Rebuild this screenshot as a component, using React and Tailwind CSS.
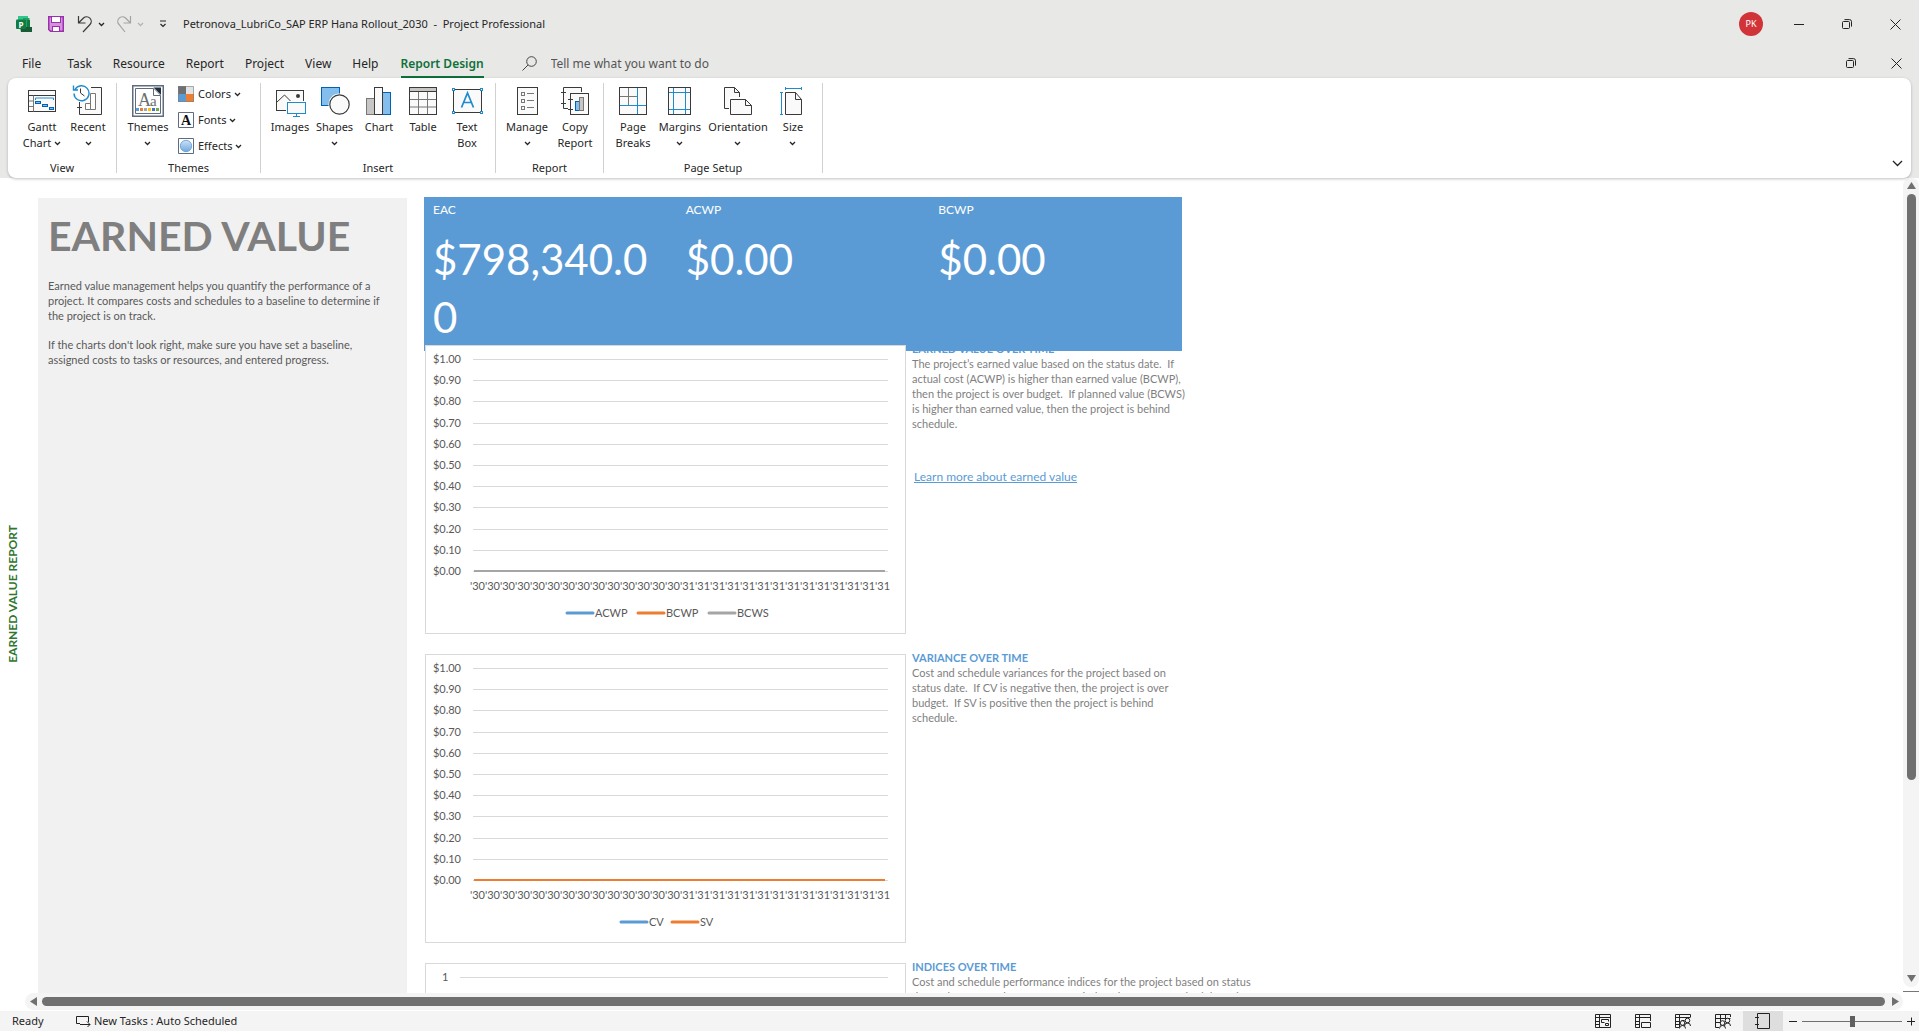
import React from 'react';

const ink = '#3b3a39';
const blue = '#1e8bcd';

function Svg({ w = 32, h = 32, children, className = '' }) {
  return (
    <svg width={w} height={h} viewBox={`0 0 ${w} ${h}`} fill="none" className={`shrink-0 ${className}`} aria-hidden="true">
      {children}
    </svg>
  );
}

function Caret({ color = '#262626' }) {
  return (
    <Svg w={7} h={5} className="inline-block">
      <path d="M1 1l2.500 2.500L6 1" stroke={color} strokeWidth="1.300" />
    </Svg>
  );
}

/* ---------- ribbon icons ---------- */
const GanttIcon = () => (
  <Svg>
    <rect x="2.500" y="5.500" width="27" height="21" fill="#fafafa" stroke={ink} />
    <path d="M2.500 10.500h27" stroke={ink} />
    <path d="M7.500 10.500v16M3 16h4.500M3 21.500h4.500" stroke="#797774" />
    <path d="M9.500 15v-2h18v2" stroke={blue} />
    <rect x="9.500" y="16.500" width="5" height="2" fill="#83beec" stroke="#0063b1" />
    <rect x="16.500" y="19.500" width="5" height="2" fill="#83beec" stroke="#0063b1" />
    <rect x="23.500" y="22.500" width="4" height="2" fill="#83beec" stroke="#0063b1" />
  </Svg>
);
const RecentIcon = () => (
  <Svg>
    <path d="M19 2.500h10.500v27h-22V17" fill="#fafafa" stroke={ink} />
    <path d="M5 22.500h5" stroke={ink} />
    <path d="M13.500 24.500v-6h5v6zM18.500 24.500V8.500h5v16z" fill="#fff" stroke="#797774" />
    <circle cx="9" cy="8" r="8.500" fill="#fff" />
    <path d="M3 4.500a7.500 7.500 0 1 1-1 4M1.500 0.500v4.500h4.500" stroke={blue} strokeWidth="1.400" />
    <path d="M8.500 3.500v4.500l4 3" stroke={ink} />
  </Svg>
);
const ThemesIcon = () => (
  <Svg>
    <rect x="0.750" y="0.750" width="30.500" height="30.500" fill="#fff" stroke="#5f6b7f" strokeWidth="1.500" />
    <path d="M3.500 3.500h18l7 7v18h-25z" fill="#fff" stroke="#5f6b7f" />
    <path d="M21.500 2.500h7.500V10z" fill="#1f2d3d" />
    <path d="M21.500 3.500v7h7" stroke="#5f6b7f" fill="#fff" />
    <text x="6" y="21" fontFamily="Liberation Serif" fontSize="18" fill="#6d6f71">A</text>
    <text x="18" y="21" fontFamily="Liberation Serif" fontSize="15" fill="#6d6f71">a</text>
    {['#5b9bd5', '#ed7d31', '#a5a5a5', '#ffc000', '#4472c4', '#70ad47'].map((c, i) => (
      <rect key={c} x={4 + i * 4} y="23" width="3" height="3" fill={c} />
    ))}
  </Svg>
);
const ImagesIcon = () => (
  <Svg>
    <rect x="2.500" y="5.500" width="27" height="20" fill="#fafafa" stroke={ink} />
    <path d="M3 17l7.500-7 7 7" stroke={ink} />
    <circle cx="24" cy="11" r="2" fill={ink} />
    <rect x="12" y="16" width="20" height="16" fill="#fff" />
    <rect x="13.500" y="17.500" width="18" height="11" fill="#fafafa" stroke={blue} />
    <path d="M22.500 29v3M19 31.500h7" stroke={blue} />
  </Svg>
);
const ShapesIcon = () => (
  <Svg>
    <rect x="2.500" y="2.500" width="18" height="18" fill="#83beec" stroke="#0063b1" />
    <circle cx="20.500" cy="19.500" r="11" fill="#fff" />
    <circle cx="20.500" cy="19.500" r="9.700" fill="#fafafa" stroke={ink} strokeWidth="1.200" />
  </Svg>
);
const ChartIcon = () => (
  <Svg>
    <rect x="3.500" y="13.500" width="8" height="16" fill="#c8c6c4" stroke="#797774" />
    <rect x="19.500" y="7.500" width="8" height="22" fill="#83beec" stroke="#0063b1" />
    <rect x="11.500" y="2.500" width="8" height="27" fill="#fafafa" stroke={ink} />
  </Svg>
);
const TableIcon = () => (
  <Svg>
    <rect x="2.500" y="2.500" width="27" height="27" fill="#fafafa" />
    <rect x="3" y="3" width="26" height="4" fill="#c8c6c4" />
    <path d="M11.500 7v22M20.500 7v22M3 14.500h26M3 22h26" stroke="#797774" />
    <path d="M2.500 6.500h27" stroke={ink} />
    <rect x="2.500" y="2.500" width="27" height="27" stroke={ink} />
  </Svg>
);
const TextBoxIcon = () => (
  <Svg>
    <rect x="2.500" y="4.500" width="28" height="23" fill="#fafafa" stroke={ink} />
    <path d="M10.500 22.500L16.500 8l6 14.500M12.500 17.500h8" stroke={blue} strokeWidth="1.700" />
    {[[1, 3], [29, 3], [1, 26], [29, 26]].map(([x, y]) => (
      <rect key={`${x}-${y}`} x={x + 0.5} y={y + 0.5} width="2" height="2" fill="#fff" stroke={blue} />
    ))}
  </Svg>
);
const ManageIcon = () => (
  <Svg>
    <rect x="6.500" y="2.500" width="20" height="27" fill="#fafafa" stroke={ink} />
    {[7, 14, 21].map((y) => (
      <g key={y} stroke="#797774">
        <rect x="10.500" y={y + 0.5} width="3" height="3" />
        <path d={`M16 ${y + 1.5}h7`} />
      </g>
    ))}
  </Svg>
);
const CopyReportIcon = () => (
  <Svg>
    <path d="M9 23.500H4.500v-21h18V7" fill="#fafafa" stroke={ink} />
    <path d="M2 7.500h5M2 18.500h5" stroke={ink} />
    <rect x="11.500" y="8.500" width="18" height="21" fill="#fafafa" stroke={ink} />
    <path d="M9 14.500h5M9 24.500h5" stroke={ink} />
    <rect x="16.500" y="16.500" width="4" height="9" fill="#83beec" stroke="#0063b1" />
    <rect x="20.500" y="12.500" width="4" height="13" fill="#c8c6c4" stroke="#797774" />
  </Svg>
);
const PageBreaksIcon = () => (
  <Svg>
    <rect x="2.500" y="2.500" width="27" height="27" fill="#fafafa" stroke={ink} />
    <path d="M11.500 3v17M3 11.500h17" stroke="#797774" />
    <path d="M20.500 3v26M3 20.500h26" stroke={blue} />
  </Svg>
);
const MarginsIcon = () => (
  <Svg>
    <rect x="4.500" y="2.500" width="22" height="27" fill="#fafafa" stroke={ink} />
    <path d="M9.500 3v26M21.500 3v26M5 7.500h21M5 24.500h21" stroke={blue} />
  </Svg>
);
const OrientationIcon = () => (
  <Svg>
    <path d="M2.500 2.500h10l5 5v16h-15z" fill="#fafafa" stroke={ink} />
    <path d="M12.500 2.500v5h5" stroke={ink} />
    <rect x="7" y="12" width="12" height="19" fill="#fff" />
    <path d="M8.500 14.500h15l6 6v9h-21z" fill="#fafafa" stroke={ink} />
    <path d="M23.500 14.500v6h6" stroke={ink} />
  </Svg>
);
const SizeIcon = () => (
  <Svg>
    <path d="M8.500 7.500h10l6 7v15h-16z" fill="#fafafa" stroke={ink} />
    <path d="M18.500 7.500v7h6" stroke={ink} />
    <path d="M8.500 3.500h16M8.500 2v3M24.500 2v3M4.500 7.500v22M3 7.500h3M3 29.500h3" stroke={blue} />
  </Svg>
);

/* ---------- ribbon pieces ---------- */
function BigButton({ icon, lines, caret, width }) {
  return (
    <button className={`flex flex-col items-center gap-[2px] text-[11px] leading-4 whitespace-nowrap ${width}`}>
      {icon}
      <span className="flex flex-col items-center">
        {lines.map((l, i) => (
          <span key={l}>
            {l}
            {caret && i === 1 && <span className="ml-[3px] inline-flex pb-px align-middle"><Caret /></span>}
          </span>
        ))}
        {caret && lines.length === 1 && <span className="flex h-4 items-center"><Caret /></span>}
      </span>
    </button>
  );
}

function SmallButton({ icon, label }) {
  return (
    <button className="flex h-[26px] items-center text-[11px] leading-4">
      {icon}
      <span className="ml-1 mr-[3px]">{label}</span>
      <Caret />
    </button>
  );
}

function Group({ label, className, pad, children }) {
  return (
    <section className={`flex flex-col border-r border-[#d1d1d1] ${className}`} aria-label={label}>
      <div className={`flex h-[77px] shrink-0 items-start pt-[2px] ${pad}`}>{children}</div>
      <h2 className="text-center text-[11px] leading-4">{label}</h2>
    </section>
  );
}

/* ---------- window glyphs ---------- */
const RestoreGlyph = () => (
  <Svg w={10} h={10}>
    <rect x="0.500" y="2.500" width="7" height="7" rx="1" stroke="#222" />
    <path d="M2.500 0.600h5a2 2 0 0 1 2 2v5" stroke="#222" />
  </Svg>
);
const CloseGlyph = () => (
  <Svg w={11} h={11}>
    <path d="M0.500 0.500l10 10M10.500 0.500l-10 10" stroke="#222" />
  </Svg>
);

/* ---------- report charts ---------- */
const dates = Array(14).fill("'30").concat(Array(14).fill("'31")).join('');

function TimeChart({ label, series, legendX }) {
  const top = series[series.length - 1];
  return (
    <svg width="481" height="289" viewBox="0 0 481 289" role="img" aria-label={label} fontFamily="Lato, sans-serif" fontSize="11" fill="#595959" className="relative z-20 block shrink-0">
      <rect x="0.500" y="0.500" width="480" height="288" fill="#fff" stroke="#d9d9d9" />
      {Array.from({ length: 11 }, (_, i) => {
        const y = 14 + Math.round(i * 21.2);
        return (
          <g key={i}>
            <path d={`M48 ${y + 0.5}h415`} stroke="#d9d9d9" />
            <text x="36" y={y + 4} textAnchor="end">{`$${(1 - i / 10).toFixed(2)}`}</text>
          </g>
        );
      })}
      <path d="M49 226h411" stroke={top.color} strokeWidth="2" />
      <text x="255" y="245" textAnchor="middle">{dates}</text>
      {series.map((s, i) => (
        <g key={s.name}>
          <path d={`M${legendX[i] + 1} 268h26`} stroke={s.color} strokeWidth="3" strokeLinecap="round" />
          <text x={legendX[i] + 29} y="272">{s.name}</text>
        </g>
      ))}
    </svg>
  );
}

function Note({ title, lines, children }) {
  return (
    <div className="-mt-1 pl-[6px] text-[11px] leading-[15px] text-[#7f7f7f] whitespace-pre">
      <h3 className="font-bold text-[#5b9bd5]">{title}</h3>
      <p>{lines.join('\n')}</p>
      {children}
    </div>
  );
}

function Kpi({ label, value }) {
  return (
    <div className="flex-1 pl-[9px] pr-[12px] pt-[4px]">
      <dt className="text-[12px] leading-[18px]">{label}</dt>
      <dd className="mt-[11px] text-[42px] leading-[58px] break-all">{value}</dd>
    </div>
  );
}

/* ---------- status bar view icons ---------- */
const Frame = ({ children }) => (
  <Svg w={17} h={16}>
    <g stroke="#222">{children}</g>
  </Svg>
);
const Person = ({ x, y }) => (
  <g>
    <circle cx={x} cy={y} r="2.300" fill="#f4f4f4" />
    <path d={`M${x - 3} ${y + 5.5}q0-3 3-3t3 3`} />
  </g>
);
const views = [
  ['Gantt Chart', <Frame key="a"><path d="M.5 1.500h15v13H.5zM.5 4.500h15M4.500 1.500v13M1 8.500h4M1 11.500h4M6.500 9.500v-3h7v2M6.500 9.500h3M10.500 10.500h3v2h-3z" /></Frame>],
  ['Task Usage', <Frame key="b"><path d="M15.500 8V1.500H.5v13H5M.5 4.500h15M4.500 1.500v13M1 8.500h4M1 11.500h4M6.500 9.500h9v5h-9z" /></Frame>],
  ['Team Planner', <Frame key="c"><path d="M15.500 4V1.500H.5v13H4M.5 4.500h15M4.500 1.500v13M1 8.500h4M1 11.500h4M6.500 7.500h3" /><Person x={7.5} y={10} /><Person x={12.5} y={7.5} /></Frame>],
  ['Resource Sheet', <Frame key="d"><path d="M15.500 4V1.500H.5v13H4M.5 5.500h15M5.500 1.500v11M10.500 1.500v4M1 9.500h5" /><Person x={7.5} y={10} /><Person x={12.5} y={7.5} /></Frame>],
  ['Report', <Frame key="e"><path d="M2.500 .5h12v15h-12zM0 4.500h4M0 11.500h4" /></Frame>],
];

const tabs = ['Task', 'Resource', 'Report', 'Project', 'View', 'Help'];

export default function App() {
  return (
    <div className="flex h-screen flex-col overflow-hidden bg-white text-[#262626] font-['Noto_Sans',sans-serif]">
      <header className="bg-[#e8e8e6]">
        <div className="flex h-12 items-center">
          <Svg w={17} h={17} className="ml-4">
            <path d="M2 0h10v5H2z" fill="#31c48d" />
            <path d="M7 2h6.500v9H7z" fill="#21a366" />
            <path d="M4 11h12v5H5z" fill="#185c37" />
            <path d="M11 4h3v7h-3z" fill="#107c41" />
            <rect y="3.500" width="10" height="9.500" rx="1" fill="#107c41" />
            <text x="2.500" y="11.500" fontFamily="Noto Sans" fontWeight="700" fontSize="8" fill="#fff">P</text>
          </Svg>
          <button aria-label="Save" className="ml-[15px]">
            <Svg w={16} h={16}>
              <path d="M.75.750h14.500v14.500H2.500L.75 13.500z" fill="#d592dc" stroke="#9b2fae" strokeWidth="1.500" />
              <rect x="3.500" y=".5" width="9" height="6" fill="#fff" stroke="#9b2fae" />
              <rect x="4.500" y="10.500" width="7" height="5" fill="#fff" stroke="#9b2fae" />
            </Svg>
          </button>
          <button aria-label="Undo" className="ml-[13px]">
            <Svg w={16} h={17}><path d="M1.500 0v7h7M1.500 7L6.500 2a4.600 4.600 0 0 1 6.500 6.500L6 16" stroke="#3b3a39" strokeWidth="1.200" /></Svg>
          </button>
          <button aria-label="Undo history" className="ml-[5px] flex"><Caret /></button>
          <button aria-label="Redo" className="ml-[12px]">
            <Svg w={16} h={17}><path d="M13.500 0v7h-7M13.500 7L8.500 2A4.600 4.600 0 0 0 2 8.500L8 16" stroke="#a3a3a1" strokeWidth="1.200" /></Svg>
          </button>
          <button aria-label="Redo history" className="ml-[4px] flex"><Caret color="#b5b5b3" /></button>
          <button aria-label="Customize quick access toolbar" className="ml-[15px]">
            <Svg w={8} h={8}><path d="M1 1h6M1.500 4l2.500 2.500L6.500 4" stroke="#262626" strokeWidth="1.200" /></Svg>
          </button>
          <h1 className="ml-4 text-[11px] whitespace-pre">Petronova_LubriCo_SAP ERP Hana Rollout_2030  -  Project Professional</h1>
          <div className="ml-auto flex items-center">
            <button className="mr-3 h-6 w-6 rounded-full bg-[#d13438] text-[9px] text-white" aria-label="Account PK">PK</button>
            <button aria-label="Minimize" className="flex h-12 w-12 items-center justify-center"><span className="h-px w-[10px] bg-[#222]" /></button>
            <button aria-label="Restore" className="flex h-12 w-12 items-center justify-center"><RestoreGlyph /></button>
            <button aria-label="Close" className="flex h-12 w-12 items-center justify-center"><CloseGlyph /></button>
          </div>
        </div>

        <div className="flex h-[30px] items-center">
          <nav className="flex gap-px pt-px pl-3 text-[12px] leading-5">
            <button className="mr-[5px] px-[10px]">File</button>
            {tabs.map((t) => <button key={t} className="px-[10px]">{t}</button>)}
            <button aria-current="page" className="mx-[11px] -mb-1 border-b-2 border-[#0f703b] pb-px font-semibold text-[#0f703b]">Report Design</button>
          </nav>
          <label className="ml-[27px] flex flex-1 items-center gap-[14px]">
            <Svg w={15} h={15}>
              <circle cx="9.500" cy="5.500" r="4.800" stroke="#444" />
              <path d="M6 9L.5 14.500" stroke="#444" />
            </Svg>
            <input aria-label="Tell me what you want to do" placeholder="Tell me what you want to do" className="w-64 bg-transparent pt-px text-[12px] leading-5 outline-none placeholder:text-[#555]" />
          </label>
          <button aria-label="Restore document" className="flex w-11 items-center justify-center"><RestoreGlyph /></button>
          <button aria-label="Close document" className="flex w-[46px] items-center justify-center"><CloseGlyph /></button>
        </div>

        <div className="px-2">
          <div className="relative z-30 flex h-[100px] rounded-[8px] bg-white py-[5px] shadow-[0_1px_3px_rgba(0,0,0,0.25)]">
            <Group label="View" className="w-[109px]" pad="pl-3">
              <BigButton width="w-11" icon={<GanttIcon />} lines={['Gantt', 'Chart']} caret />
              <BigButton width="w-12" icon={<RecentIcon />} lines={['Recent']} caret />
            </Group>
            <Group label="Themes" className="w-36" pad="pl-[5px]">
              <BigButton width="w-[52px]" icon={<ThemesIcon />} lines={['Themes']} caret />
              <div className="-mt-1 ml-1 flex flex-col">
                <SmallButton label="Colors" icon={<Svg w={16} h={16}>
                  <path d="M0 0h8v8H0z" fill="#6d6f71" /><path d="M8 0h8v8H8z" fill="#e3e3e3" />
                  <path d="M0 8h8v8H0z" fill="#5b9bd5" /><path d="M8 8h8v8H8z" fill="#ed7d31" />
                  <path d="M.5.500h15v15H.5z" stroke="#7f7f7f" strokeOpacity=".6" />
                </Svg>} />
                <SmallButton label="Fonts" icon={<Svg w={16} h={16}>
                  <path d="M.5.500h15v15H.5z" fill="#fff" stroke="#5f6b7f" />
                  <text x="8" y="13" textAnchor="middle" fontFamily="Liberation Serif" fontWeight="700" fontSize="14" fill="#111">A</text>
                </Svg>} />
                <SmallButton label="Effects" icon={<Svg w={16} h={16}>
                  <defs><linearGradient id="fx" x1="0" y1="0" x2="0" y2="1"><stop stopColor="#cfe2f6" /><stop offset="1" stopColor="#6fa8dc" /></linearGradient></defs>
                  <path d="M.5.500h15v15H.5z" fill="#fff" stroke="#5f6b7f" />
                  <circle cx="8" cy="8" r="5.700" fill="url(#fx)" stroke="#5b9bd5" strokeWidth=".8" />
                </Svg>} />
              </div>
            </Group>
            <Group label="Insert" className="w-[235px]" pad="pl-[7px]">
              <BigButton width="w-11" icon={<ImagesIcon />} lines={['Images']} />
              <BigButton width="w-[45px]" icon={<ShapesIcon />} lines={['Shapes']} caret />
              <BigButton width="w-11" icon={<ChartIcon />} lines={['Chart']} />
              <BigButton width="w-11" icon={<TableIcon />} lines={['Table']} />
              <BigButton width="w-11" icon={<TextBoxIcon />} lines={['Text', 'Box']} />
            </Group>
            <Group label="Report" className="w-[108px]" pad="pl-[6px]">
              <BigButton width="w-[50px]" icon={<ManageIcon />} lines={['Manage']} caret />
              <BigButton width="w-[46px]" icon={<CopyReportIcon />} lines={['Copy', 'Report']} />
            </Group>
            <Group label="Page Setup" className="w-[219px]" pad="pl-[7px]">
              <BigButton width="w-11" icon={<PageBreaksIcon />} lines={['Page', 'Breaks']} />
              <BigButton width="w-[50px]" icon={<MarginsIcon />} lines={['Margins']} caret />
              <BigButton width="w-[66px]" icon={<OrientationIcon />} lines={['Orientation']} caret />
              <BigButton width="w-11" icon={<SizeIcon />} lines={['Size']} caret />
            </Group>
            <button aria-label="Collapse ribbon" className="mr-2 mb-1 ml-auto self-end">
              <Svg w={11} h={11}><path d="M1 3l4.500 4.500L10 3" stroke="#222" strokeWidth="1.300" /></Svg>
            </button>
          </div>
        </div>
      </header>

      <div className="flex min-h-0 flex-1">
        <div className="flex min-w-0 flex-1 flex-col">
          <main className="flex min-h-0 flex-1 overflow-hidden font-[Lato,sans-serif]">
            <div className="flex w-[38px] shrink-0 items-center pl-1 pt-4">
              <p className="rotate-180 text-[12px] leading-[18px] font-bold whitespace-nowrap text-[#31752f] [writing-mode:vertical-rl]">EARNED VALUE REPORT</p>
            </div>
            <aside className="mt-5 w-[369px] shrink-0 bg-[#f1f1f1] px-[10px] pt-3 text-[11px] leading-[15px] text-[#595959]">
              <h2 className="text-[41px] leading-[52px] font-bold text-[#7f7f7f]">EARNED VALUE</h2>
              <p className="mt-4 whitespace-pre-line">{'Earned value management helps you quantify the performance of a\nproject. It compares costs and schedules to a baseline to determine if\nthe project is on track.'}</p>
              <p className="mt-[14px] whitespace-pre-line">{"If the charts don't look right, make sure you have set a baseline,\nassigned costs to tasks or resources, and entered progress."}</p>
            </aside>
            <div className="ml-[17px] mt-[19px] flex flex-col">
              <dl className="relative z-10 flex h-[154px] w-[758px] shrink-0 bg-[#5b9bd5] text-white">
                <Kpi label="EAC" value="$798,340.00" />
                <Kpi label="ACWP" value="$0.00" />
                <Kpi label="BCWP" value="$0.00" />
              </dl>
              <div className="-mt-[6px] flex flex-col gap-5 pl-px">
                <section className="flex">
                  <TimeChart label="Earned value over time" legendX={[141, 212, 283]} series={[
                    { name: 'ACWP', color: '#5b9bd5' }, { name: 'BCWP', color: '#ed7d31' }, { name: 'BCWS', color: '#a5a5a5' },
                  ]} />
                  <Note title="EARNED VALUE OVER TIME" lines={[
                    'The project’s earned value based on the status date.  If',
                    'actual cost (ACWP) is higher than earned value (BCWP),',
                    'then the project is over budget.  If planned value (BCWS)',
                    'is higher than earned value, then the project is behind',
                    'schedule.',
                  ]}>
                    <a href="#earned-value" className="mt-[38px] ml-[2px] block text-[12px] text-[#5b9bd5] underline">Learn more about earned value</a>
                  </Note>
                </section>
                <section className="flex">
                  <TimeChart label="Variance over time" legendX={[195, 246]} series={[
                    { name: 'CV', color: '#5b9bd5' }, { name: 'SV', color: '#ed7d31' },
                  ]} />
                  <Note title="VARIANCE OVER TIME" lines={[
                    'Cost and schedule variances for the project based on',
                    'status date.  If CV is negative then, the project is over',
                    'budget.  If SV is positive then the project is behind',
                    'schedule.',
                  ]} />
                </section>
                <section className="flex">
                  <svg width="481" height="289" viewBox="0 0 481 289" role="img" aria-label="Indices over time" className="block shrink-0">
                    <rect x="0.500" y="0.500" width="480" height="288" fill="#fff" stroke="#d9d9d9" />
                    <path d="M35 14.500h428" stroke="#d9d9d9" />
                    <text x="17" y="18" fontFamily="Lato, sans-serif" fontSize="11" fill="#595959">1</text>
                  </svg>
                  <Note title="INDICES OVER TIME" lines={[
                    'Cost and schedule performance indices for the project based on status',
                    'date.  The greater the performance index, the more on schedule and',
                  ]} />
                </section>
              </div>
            </div>
          </main>
          <div className="mb-px ml-[25px] flex h-[17px] items-center rounded-full bg-[#f4f4f4] pr-1 pl-[5px]">
            <Svg w={7} h={9}><path d="M7 0v9L0 4.500z" fill="#707070" /></Svg>
            <span className="mr-[7px] ml-[5px] h-[9px] flex-1 rounded-full bg-[#707070]" />
            <Svg w={7} h={9}><path d="M0 0v9l7-4.500z" fill="#707070" /></Svg>
          </div>
        </div>
        <div className="flex w-4 flex-col">
          <div className="flex flex-1 flex-col items-center rounded-[8px] bg-[#f4f4f4] pt-1 pb-[5px]">
            <Svg w={9} h={7}><path d="M0 7h9L4.500 0z" fill="#707070" /></Svg>
            <span className="mt-[5px] w-[9px] flex-[75] rounded-full bg-[#707070]" />
            <span className="flex-[25]" />
            <Svg w={9} h={7}><path d="M0 0h9L4.500 7z" fill="#707070" /></Svg>
          </div>
          <span className="mt-1 mb-[19px] h-px bg-[#777]" />
        </div>
      </div>

      <footer className="flex h-5 items-center bg-[#f4f4f4] text-[11px]">
        <span className="ml-3 w-16">Ready</span>
        <button className="flex items-center gap-[3px]">
          <Svg w={15} h={12}>
            <path d="M4 8.500H.5v-7h12V7M4 9.500h10M11 6.500l3 3-3 3" stroke="#222" />
          </Svg>
          New Tasks : Auto Scheduled
        </button>
        <div className="ml-auto flex h-full items-center">
          {views.map(([name, icon], i) => (
            <button key={name} aria-label={name} className={`flex h-full w-10 items-center justify-center ${i === 4 ? 'bg-[#dedede]' : ''}`}>{icon}</button>
          ))}
          <button aria-label="Zoom out" className="ml-[6px] flex"><Svg w={8} h={9}><path d="M0 4.500h8" stroke="#222" /></Svg></button>
          <input
            type="range" aria-label="Zoom" defaultValue="50"
            className="mx-[5px] h-[11px] w-[100px] appearance-none bg-[linear-gradient(#707070,#707070)] bg-[length:100%_1px] bg-center bg-no-repeat [&::-webkit-slider-thumb]:h-[11px] [&::-webkit-slider-thumb]:w-[5px] [&::-webkit-slider-thumb]:appearance-none [&::-webkit-slider-thumb]:bg-[#606060]"
          />
          <button aria-label="Zoom in" className="mr-1 flex"><Svg w={8} h={9}><path d="M0 4.500h8M4.500 .5v8" stroke="#222" /></Svg></button>
        </div>
      </footer>
    </div>
  );
}
